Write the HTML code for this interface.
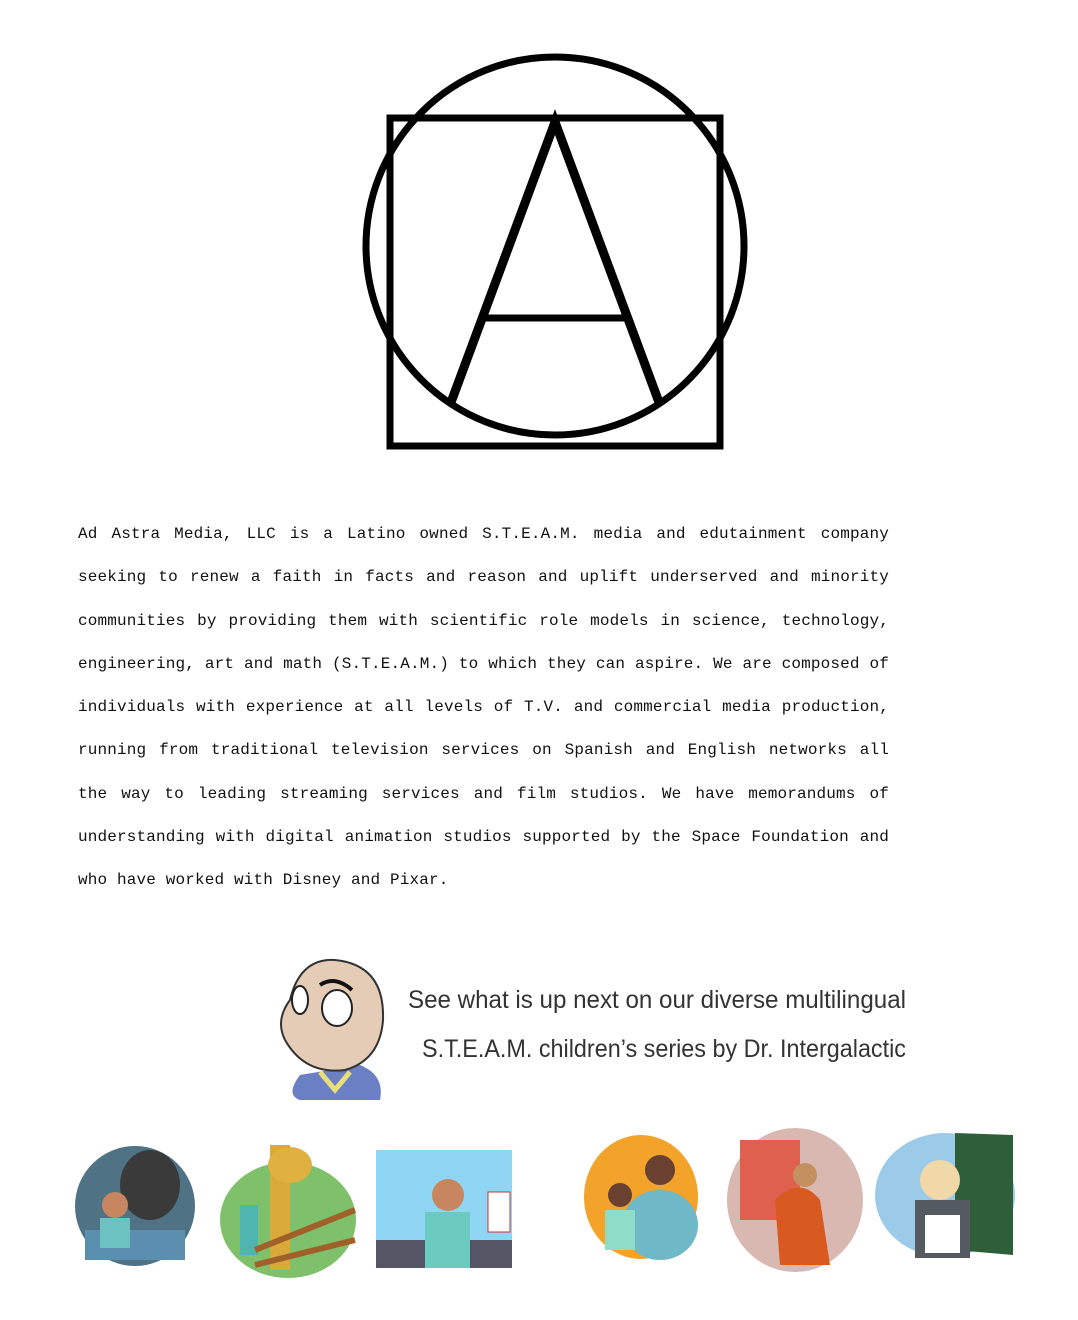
<!DOCTYPE html>
<html><head><meta charset="utf-8"><style>
html,body{margin:0;padding:0;background:#fff;width:1078px;height:1320px;overflow:hidden;position:relative}
.p{position:absolute;left:78px;top:513px;width:811px;font-family:"Liberation Mono",monospace;font-size:16px;letter-spacing:0.15px;line-height:43.3px;text-align:justify;color:#111}
svg{position:absolute;left:0;top:0}
</style></head><body>
<svg width="1078" height="1320" viewBox="0 0 1078 1320">
<g fill="none" stroke="#000" stroke-width="7">
<circle cx="555" cy="246" r="189"/>
<rect x="390" y="118" width="330" height="328"/>
<path d="M450 405 L555 122 L660 405" stroke-width="9"/>
<path d="M484 318 L628 318"/>
</g>
<path d="M300 1075 Q285 1095 300 1100 L380 1100 Q385 1075 360 1065 Z" fill="#6b7fc4"/>
<path d="M320 1072 L335 1090 L350 1072" fill="none" stroke="#e8df7a" stroke-width="5"/>
<path d="M290 1000 Q300 958 335 960 Q385 965 383 1020 Q380 1060 345 1070 Q305 1075 285 1040 Q275 1020 290 1000 Z" fill="#e4ccb6" stroke="#333" stroke-width="2"/>
<ellipse cx="337" cy="1008" rx="15" ry="18" fill="#fff" stroke="#222" stroke-width="2"/>
<ellipse cx="300" cy="1000" rx="8" ry="14" fill="#fff" stroke="#222" stroke-width="2"/>
<path d="M320 985 Q335 975 352 990" fill="none" stroke="#111" stroke-width="4"/>
<text x="408" y="1008" font-family="Liberation Sans Narrow,Liberation Sans,sans-serif" font-size="25" fill="#333" textLength="498" lengthAdjust="spacingAndGlyphs">See what is up next on our diverse multilingual</text>
<text x="422" y="1057" font-family="Liberation Sans Narrow,Liberation Sans,sans-serif" font-size="25" fill="#333" textLength="484" lengthAdjust="spacingAndGlyphs">S.T.E.A.M. children’s series by Dr. Intergalactic</text>
<ellipse cx="135" cy="1206" rx="60" ry="60" fill="#4f7285"/>
<ellipse cx="150" cy="1185" rx="30" ry="35" fill="#3a3a3a"/>
<rect x="85" y="1230" width="100" height="30" fill="#5a8fb0"/>
<circle cx="115" cy="1205" r="13" fill="#c88660"/>
<rect x="100" y="1218" width="30" height="30" fill="#6cc2c0"/>
<ellipse cx="288" cy="1220" rx="68" ry="58" fill="#7fc06a"/>
<rect x="270" y="1145" width="20" height="125" fill="#d9a93a"/>
<ellipse cx="290" cy="1165" rx="22" ry="18" fill="#e0b040"/>
<rect x="240" y="1205" width="18" height="50" fill="#4fb5b0"/>
<path d="M255 1250 L355 1210 M255 1265 L355 1240" stroke="#a0602a" stroke-width="6"/>
<rect x="376" y="1150" width="136" height="118" fill="#8fd6f5"/>
<rect x="376" y="1240" width="136" height="28" fill="#556"/>
<circle cx="448" cy="1195" r="16" fill="#c88660"/>
<rect x="425" y="1212" width="45" height="56" fill="#6ccbc0"/>
<rect x="488" y="1192" width="22" height="40" fill="#fff" stroke="#c33"/>
<ellipse cx="641" cy="1197" rx="57" ry="62" fill="#f3a32a"/>
<ellipse cx="660" cy="1225" rx="38" ry="35" fill="#6fb8c8"/>
<circle cx="660" cy="1170" r="15" fill="#6a4030"/>
<circle cx="620" cy="1195" r="12" fill="#6a4030"/>
<rect x="605" y="1210" width="30" height="40" fill="#8fdcc8"/>
<ellipse cx="795" cy="1200" rx="68" ry="72" fill="#d8b8b0"/>
<rect x="740" y="1140" width="60" height="80" fill="#e06050"/>
<path d="M775 1200 Q800 1175 820 1200 L830 1265 L780 1265 Z" fill="#d85a20"/>
<circle cx="805" cy="1175" r="12" fill="#c59060"/>
<ellipse cx="945" cy="1195" rx="70" ry="62" fill="#9ccbea"/>
<path d="M955 1133 L1013 1135 L1013 1255 L955 1250 Z" fill="#2f5f3a"/>
<circle cx="940" cy="1180" r="20" fill="#f0d8a8"/>
<rect x="915" y="1200" width="55" height="58" fill="#555a60"/>
<rect x="925" y="1215" width="35" height="38" fill="#fff"/>
</svg>
<div class="p">Ad Astra Media, LLC is a Latino owned S.T.E.A.M. media and edutainment company seeking to renew a faith in facts and reason and uplift underserved and minority communities by providing them with scientific role models in science, technology, engineering, art and math (S.T.E.A.M.) to which they can aspire. We are composed of individuals with experience at all levels of T.V. and commercial media production, running from traditional television services on Spanish and English networks all the way to leading streaming services and film studios. We have memorandums of understanding with digital animation studios supported by the Space Foundation and who have worked with Disney and Pixar.</div>
</body></html>
